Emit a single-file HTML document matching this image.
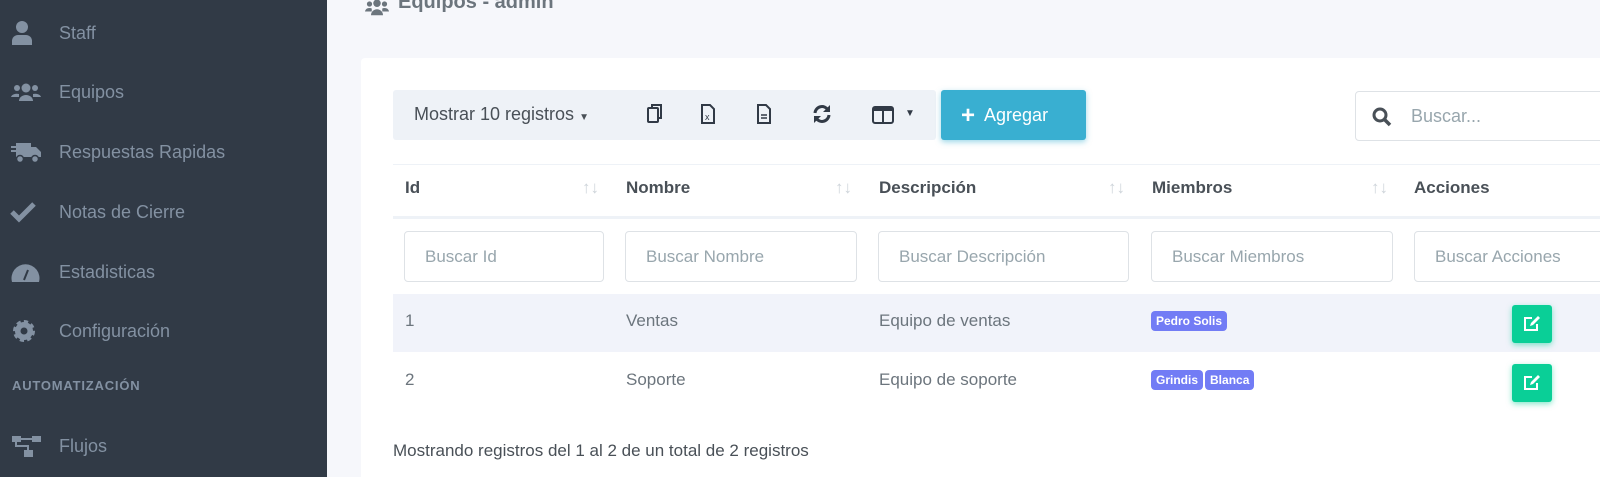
<!DOCTYPE html>
<html><head><meta charset="utf-8"><style>
*{box-sizing:border-box;margin:0;padding:0}
html{width:1600px;height:477px;overflow:hidden}
body{width:1600px;height:477px;overflow:hidden;background:#f6f7fb;font-family:"Liberation Sans",sans-serif;position:relative}
.sb{position:absolute;left:0;top:0;width:327px;height:477px;background:#313a46}
.it{position:absolute;left:0;width:327px;height:30px;color:#8391a2;font-size:18px;line-height:30px}
.it svg{position:absolute;left:10px;top:3px;width:32px;height:24px}
.it span{position:absolute;left:59px}
.sec{position:absolute;left:12px;top:378px;color:#8391a2;font-size:13px;font-weight:bold;letter-spacing:.8px}
.title{position:absolute;left:360px;top:-9px;font-size:20px;font-weight:bold;color:#6c757d}
.card{position:absolute;left:361px;top:58px;width:1239px;height:419px;background:#fff;border-radius:4px 0 0 0}
.abs{position:absolute}
.tb{left:393px;top:90px;width:543px;height:50px;background:#eef2f7;border-radius:3px}
.btn{left:941px;top:90px;width:145px;height:50px;background:#39afd1;border-radius:3px;color:#fff;font-size:18px;line-height:50px;box-shadow:0 2px 6px rgba(57,175,209,.5)}
.srch{left:1355px;top:91px;width:250px;height:50px;border:1px solid #dee2e6;border-radius:4px;color:#98a6ad;font-size:18px;line-height:48px}
.th{top:178px;font-size:17px;font-weight:bold;color:#495057}
.ar{top:178px;font-size:17px;color:#ced4da}
.in{top:231px;height:51px;border:1px solid #dee2e6;border-radius:4px;color:#98a6ad;font-size:17px;line-height:49px;padding-left:20px;white-space:nowrap;overflow:hidden;background:#fff}
.td{font-size:17px;color:#6c757d}
.bd{display:inline-block;background:#727cf5;color:#fff;font-size:12px;font-weight:bold;padding:3px 5px;border-radius:4px;margin-right:2px}
.ed{left:1512px;width:40px;height:38px;background:#0acf97;border-radius:3px;box-shadow:0 2px 6px rgba(10,207,151,.5)}
</style></head><body>
<div class="sb">
<div class="it" style="top:18px"><svg viewBox="0 0 32 24"><circle cx="12" cy="6" r="6" fill="#8391a2"/><path d="M2 24v-4a6 6 0 0 1 6-6h8a6 6 0 0 1 6 6v4z" fill="#8391a2"/></svg><span>Staff</span></div>
<div class="it" style="top:77px"><svg viewBox="0 0 32 24"><circle cx="16" cy="8" r="4.5" fill="#8391a2"/><circle cx="7" cy="8" r="3" fill="#8391a2"/><circle cx="25" cy="8" r="3" fill="#8391a2"/><path d="M9 21a7 6 0 0 1 14 0z M1 17a6 4 0 0 1 8-3v3z M31 17a6 4 0 0 0-8-3v3z" fill="#8391a2"/></svg><span>Equipos</span></div>
<div class="it" style="top:137px"><svg viewBox="0 0 32 24"><rect x="6" y="3" width="15" height="14" fill="#8391a2"/><path d="M21 7h5l5 5v5H21z" fill="#8391a2"/><rect x="1" y="6" width="8" height="2" fill="#8391a2"/><rect x="1" y="10" width="8" height="2" fill="#8391a2"/><circle cx="10" cy="19" r="3.5" fill="#8391a2" stroke="#313a46" stroke-width="1.5"/><circle cx="25" cy="19" r="3.5" fill="#8391a2" stroke="#313a46" stroke-width="1.5"/></svg><span>Respuestas Rapidas</span></div>
<div class="it" style="top:197px"><svg viewBox="0 0 32 24"><path d="M2 12l7 7L24 4" stroke="#8391a2" stroke-width="5" fill="none"/></svg><span>Notas de Cierre</span></div>
<div class="it" style="top:257px"><svg viewBox="0 0 32 24"><path d="M2 22a14 14 0 1 1 27 0z" fill="#8391a2"/><path d="M14 20l4-10" stroke="#313a46" stroke-width="2"/></svg><span>Estadisticas</span></div>
<div class="it" style="top:316px"><svg viewBox="0 0 32 24"><circle cx="14" cy="12" r="9" fill="#8391a2" stroke="#8391a2" stroke-width="4" stroke-dasharray="4 3"/><circle cx="14" cy="12" r="3.5" fill="#313a46"/></svg><span>Configuración</span></div>
<div class="sec">AUTOMATIZACIÓN</div>
<div class="it" style="top:431px"><svg viewBox="0 0 32 24"><rect x="2" y="2" width="9" height="6" fill="#8391a2"/><rect x="22" y="2" width="9" height="6" fill="#8391a2"/><rect x="14" y="16" width="9" height="7" fill="#8391a2"/><path d="M6 8v4h12v4M11 5h11" stroke="#8391a2" stroke-width="2" fill="none"/></svg><span>Flujos</span></div>
</div>
<svg class="abs" style="left:360px;top:-2px" width="34" height="18" viewBox="0 0 32 24"><circle cx="16" cy="7" r="5" fill="#6c757d"/><circle cx="6" cy="8" r="3.5" fill="#6c757d"/><circle cx="26" cy="8" r="3.5" fill="#6c757d"/><path d="M8 23a8 8 0 0 1 16 0z M0 18a6 5 0 0 1 9-4v4z M32 18a6 5 0 0 0-9-4v4z" fill="#6c757d"/></svg>
<div class="title" style="left:398px">Equipos - admin</div>
<div class="card"></div>
<div class="abs tb"></div>
<div class="abs" style="left:414px;top:104px;font-size:18px;color:#495057">Mostrar 10 registros <span style="font-size:10px">▼</span></div>
<svg class="abs" style="left:645px;top:103px" width="20" height="22" viewBox="0 0 20 22"><rect x="3" y="5" width="10" height="14" rx="1" fill="none" stroke="#313a46" stroke-width="2"/><path d="M7 5V2h9v13h-3" fill="none" stroke="#313a46" stroke-width="2"/></svg>
<svg class="abs" style="left:700px;top:103px" width="16" height="22" viewBox="0 0 16 22"><path d="M2 2h8l4 4v14H2z" fill="none" stroke="#313a46" stroke-width="2"/><text x="5" y="17" font-size="9" fill="#313a46" font-family="Liberation Sans">x</text></svg>
<svg class="abs" style="left:756px;top:103px" width="16" height="22" viewBox="0 0 16 22"><path d="M2 2h8l4 4v14H2z" fill="none" stroke="#313a46" stroke-width="2"/><path d="M5 12h6M5 15h6" stroke="#313a46" stroke-width="1.5"/></svg>
<svg class="abs" style="left:811px;top:103px" width="22" height="22" viewBox="0 0 22 22"><path d="M4 10a7 7 0 0 1 13-3M18 12a7 7 0 0 1-13 3" fill="none" stroke="#313a46" stroke-width="3"/><path d="M19 2v7h-7zM3 20v-7h7z" fill="#313a46"/></svg>
<svg class="abs" style="left:872px;top:106px" width="22" height="18" viewBox="0 0 22 18"><rect x="1" y="1" width="20" height="16" rx="2" fill="none" stroke="#313a46" stroke-width="2"/><rect x="1" y="1" width="20" height="4" fill="#313a46"/><path d="M11 4v13" stroke="#313a46" stroke-width="2"/></svg>
<div class="abs" style="left:905px;top:108px;font-size:10px;color:#313a46">▼</div>
<div class="abs btn"><span style="margin-left:20px;font-weight:bold;font-size:24px;vertical-align:-2px">+</span>&nbsp; Agregar</div>
<div class="abs srch"><svg style="position:absolute;left:16px;top:15px" width="20" height="20" viewBox="0 0 20 20"><circle cx="8" cy="8" r="6" fill="none" stroke="#495057" stroke-width="3"/><path d="M12 12l6 6" stroke="#495057" stroke-width="3.5"/></svg><span style="margin-left:55px">Buscar...</span></div>
<div class="abs" style="left:393px;top:164px;width:1220px;height:1px;background:#eef2f7"></div>
<div class="abs" style="left:393px;top:216px;width:1220px;height:3px;background:#eef2f7"></div>
<div class="abs th" style="left:405px">Id</div><div class="abs ar" style="left:582px">↑↓</div>
<div class="abs th" style="left:626px">Nombre</div><div class="abs ar" style="left:835px">↑↓</div>
<div class="abs th" style="left:879px">Descripción</div><div class="abs ar" style="left:1108px">↑↓</div>
<div class="abs th" style="left:1152px">Miembros</div><div class="abs ar" style="left:1371px">↑↓</div>
<div class="abs th" style="left:1414px">Acciones</div>
<div class="abs in" style="left:404px;width:200px">Buscar Id</div>
<div class="abs in" style="left:625px;width:232px">Buscar Nombre</div>
<div class="abs in" style="left:878px;width:251px">Buscar Descripción</div>
<div class="abs in" style="left:1151px;width:242px">Buscar Miembros</div>
<div class="abs in" style="left:1414px;width:200px">Buscar Acciones</div>
<div class="abs" style="left:393px;top:294px;width:1220px;height:58px;background:#f1f3fa"></div>
<div class="abs td" style="left:405px;top:311px">1</div><div class="abs td" style="left:626px;top:311px">Ventas</div><div class="abs td" style="left:879px;top:311px">Equipo de ventas</div>
<div class="abs" style="left:1151px;top:311px"><span class="bd">Pedro Solis</span></div>
<div class="abs td" style="left:405px;top:370px">2</div><div class="abs td" style="left:626px;top:370px">Soporte</div><div class="abs td" style="left:879px;top:370px">Equipo de soporte</div>
<div class="abs" style="left:1151px;top:370px"><span class="bd">Grindis</span><span class="bd">Blanca</span></div>
<div class="abs ed" style="top:305px"></div><div class="abs ed" style="top:364px"></div>
<svg class="abs" style="left:1523px;top:315px" width="18" height="17" viewBox="0 0 18 17"><path d="M9 3H2v12h12V9" fill="none" stroke="#fff" stroke-width="2"/><path d="M7 11l1-3 7-7 2 2-7 7z" fill="#fff"/></svg>
<svg class="abs" style="left:1523px;top:374px" width="18" height="17" viewBox="0 0 18 17"><path d="M9 3H2v12h12V9" fill="none" stroke="#fff" stroke-width="2"/><path d="M7 11l1-3 7-7 2 2-7 7z" fill="#fff"/></svg>
<div class="abs td" style="left:393px;top:441px;color:#495057">Mostrando registros del 1 al 2 de un total de 2 registros</div>
</body></html>
